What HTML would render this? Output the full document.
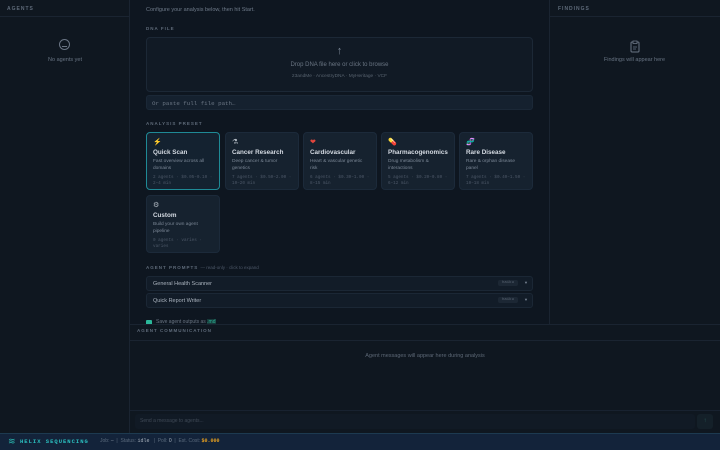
<!DOCTYPE html>
<html><head><meta charset="utf-8"><style>
*{box-sizing:border-box;margin:0;padding:0}
body{width:720px;height:450px;overflow:hidden;background:#0e1620;font-family:"Liberation Sans",sans-serif;color:#8a96a6;position:relative}
.abs{position:absolute}
.lbl{font-size:5px;letter-spacing:1px;color:#5f6b7a;font-weight:bold}
.card{position:absolute;width:74px;height:58px;background:#16222f;border:1px solid #1c2a3a;border-radius:4px;padding:5px 6px}
.card .ic{font-size:7px;height:9px}
.card .t{font-size:6.3px;font-weight:bold;color:#d4dae2;margin-top:2px}
.card .d{font-size:4.8px;color:#7b8796;line-height:7px;margin-top:2px}
.card .m{font-family:"Liberation Mono",monospace;font-size:4.3px;color:#4d5868;line-height:5.5px;margin-top:3px}
.row{position:absolute;left:146px;width:387px;height:15px;background:#121c28;border:1px solid #1b2735;border-radius:3px;font-size:5.5px;color:#aab3be;padding:4px 6px}
.tag{position:absolute;right:14px;top:3px;font-family:"Liberation Mono",monospace;font-size:4px;background:#1c2734;color:#5b6674;padding:1px 4px;border-radius:2px}
.arr{position:absolute;right:4px;top:3px;font-size:4px;color:#7b8796}
</style></head><body>
<div class="abs" style="left:0;top:0;width:130px;height:433px;background:#0f1720;border-right:1px solid #1a2431"></div>
<div class="abs lbl" style="left:7px;top:6px">AGENTS</div>
<div class="abs" style="left:0;top:16px;width:130px;border-top:1px solid #1a2431"></div>
<div class="abs" style="left:59px;top:39px;width:11px;height:11px;border:1px solid #6a7584;border-radius:50%"></div>
<div class="abs" style="left:62px;top:45px;width:5px;height:2px;border-bottom:1px solid #6a7584"></div>
<div class="abs" style="left:0;top:57px;width:130px;text-align:center;font-size:5.5px;color:#687483">No agents yet</div>
<div class="abs" style="left:549px;top:0;width:171px;height:325px;background:#0f1720;border-left:1px solid #1a2431"></div>
<div class="abs lbl" style="left:558px;top:6px">FINDINGS</div>
<div class="abs" style="left:549px;top:16px;width:171px;border-top:1px solid #1a2431"></div>
<svg class="abs" style="left:630px;top:40px" width="10" height="13" viewBox="0 0 10 13"><rect x="1" y="2" width="8" height="10" rx="1" fill="none" stroke="#6a7584"/><rect x="3" y="1" width="4" height="2.5" fill="#0f1720" stroke="#6a7584" stroke-width=".8"/><path d="M3 7h4M3 9h3" stroke="#6a7584" stroke-width=".8"/></svg>
<div class="abs" style="left:549px;top:57px;width:171px;text-align:center;font-size:5.5px;color:#687483">Findings will appear here</div>
<div class="abs" style="left:146px;top:7px;font-size:5.5px;color:#6f7b8a">Configure your analysis below, then hit Start.</div>
<div class="abs lbl" style="left:146px;top:26px;font-size:4.5px">DNA FILE</div>
<div class="abs" style="left:146px;top:37px;width:387px;height:55px;border:1px solid #1c2836;border-radius:4px;background:#111a25"></div>
<div class="abs" style="left:146px;top:45px;width:387px;text-align:center;font-size:11px;color:#7b8796">↑</div>
<div class="abs" style="left:146px;top:62px;width:387px;text-align:center;font-size:6px;color:#6a7583">Drop DNA file here or click to browse</div>
<div class="abs" style="left:146px;top:74px;width:387px;text-align:center;font-size:4.8px;color:#58636f">23andMe · AncestryDNA · MyHeritage · VCF</div>
<div class="abs" style="left:146px;top:95px;width:387px;height:15px;background:#15212f;border:1px solid #1b2837;border-radius:3px;font-family:'Liberation Mono',monospace;font-size:5.8px;color:#6a7583;padding:4px 5px">Or paste full file path…</div>
<div class="abs lbl" style="left:146px;top:121px;font-size:4.5px">ANALYSIS PRESET</div>
<div class="card" style="left:146px;top:132px;border:1px solid #1f8a96;background:#142230"><div class="ic" style="color:#f0c020">⚡</div><div class="t">Quick Scan</div><div class="d">Fast overview across all domains</div><div class="m">2 agents · $0.05–0.10 · 2–4 min</div></div>
<div class="card" style="left:225px;top:132px"><div class="ic" style="color:#b0b8c0">⚗</div><div class="t">Cancer Research</div><div class="d">Deep cancer &amp; tumor genetics</div><div class="m">7 agents · $0.50–2.00 · 10–20 min</div></div>
<div class="card" style="left:303px;top:132px"><div class="ic" style="color:#e2453c">❤</div><div class="t">Cardiovascular</div><div class="d">Heart &amp; vascular genetic risk</div><div class="m">6 agents · $0.30–1.00 · 8–15 min</div></div>
<div class="card" style="left:381px;top:132px"><div class="ic" style="color:#e8a030">💊</div><div class="t">Pharmacogenomics</div><div class="d">Drug metabolism &amp; interactions</div><div class="m">5 agents · $0.20–0.80 · 6–12 min</div></div>
<div class="card" style="left:459px;top:132px"><div class="ic" style="color:#5aa0c0">🧬</div><div class="t">Rare Disease</div><div class="d">Rare &amp; orphan disease panel</div><div class="m">7 agents · $0.40–1.50 · 10–18 min</div></div>
<div class="card" style="left:146px;top:195px"><div class="ic" style="color:#b0b8c0">⚙</div><div class="t">Custom</div><div class="d">Build your own agent pipeline</div><div class="m">0 agents · varies · varies</div></div>
<div class="abs lbl" style="left:146px;top:265px;font-size:4.5px">AGENT PROMPTS <span style="font-weight:normal;letter-spacing:0;color:#4d5868">— read-only · click to expand</span></div>
<div class="row" style="top:276px">General Health Scanner<span class="tag">haiku</span><span class="arr">▼</span></div>
<div class="row" style="top:293px">Quick Report Writer<span class="tag">haiku</span><span class="arr">▼</span></div>
<div class="abs" style="left:146px;top:320px;width:6px;height:5px;background:#2bb89a;border-radius:1px"></div>
<div class="abs" style="left:156px;top:319px;font-size:5px;color:#6a7583">Save agent outputs as <span style="background:#173a3a;color:#2bb89a">.md</span></div>
<div class="abs" style="left:130px;top:324px;width:590px;height:109px;background:#0f1720;border-top:1px solid #1a2431"></div>
<div class="abs lbl" style="left:137px;top:328px;font-size:4.5px">AGENT COMMUNICATION</div>
<div class="abs" style="left:130px;top:340px;width:590px;border-top:1px solid #1a2431"></div>
<div class="abs" style="left:130px;top:353px;width:590px;text-align:center;font-size:5.5px;color:#5d6876">Agent messages will appear here during analysis</div>
<div class="abs" style="left:130px;top:410px;width:590px;border-top:1px solid #182230"></div>
<div class="abs" style="left:135px;top:414px;width:560px;height:15px;background:#111a25;border-radius:3px;font-size:5px;color:#3f4956;padding:4px 5px">Send a message to agents...</div>
<div class="abs" style="left:697px;top:414px;width:16px;height:15px;background:#142029;border-radius:3px;text-align:center;font-size:6px;color:#2a5a5a;line-height:15px">↑</div>
<div class="abs" style="left:0;top:433px;width:720px;height:17px;background:#13233a;border-top:1px solid #1d3a50"></div>
<div class="abs" style="left:8px;top:436px;font-size:9px;color:#2bb8b0;line-height:10px">≋</div>
<div class="abs" style="left:20px;top:438px;font-family:'Liberation Mono',monospace;font-size:5.5px;font-weight:bold;letter-spacing:1px;color:#2bc0c0">HELIX SEQUENCING</div>
<div class="abs" style="left:100px;top:438px;font-size:5px;color:#5a6a7c">Job: <span style="color:#8a96a6">–</span> &nbsp;|&nbsp; Status: <span style="font-family:'Liberation Mono',monospace;color:#aab3be">idle</span> &nbsp;&nbsp;|&nbsp; Poll: <span style="color:#aab3be">0</span> &nbsp;|&nbsp; Est. Cost: <span style="font-family:'Liberation Mono',monospace;font-weight:bold;color:#e8a020">$0.000</span></div>
</body></html>
